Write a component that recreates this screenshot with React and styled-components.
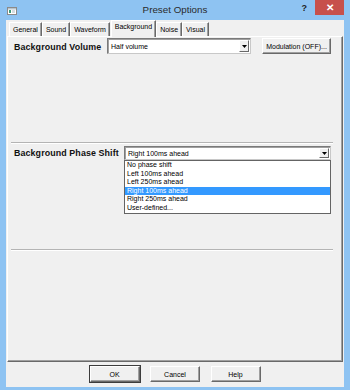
import React from "react";
import styled, { createGlobalStyle } from "styled-components";

const Global = createGlobalStyle`
  html, body { margin: 0; padding: 0; background: #8ec3f2; }
  body { font-family: "Liberation Sans", Arial, sans-serif; }
  * { box-sizing: border-box; }
`;

const Window = styled.div`
  width: 350px;
  height: 390px;
  background: #8ec3f2;
  display: flex;
  flex-direction: column;
`;

const TitleBar = styled.div`
  height: 20px;
  display: grid;
  grid-template-columns: 1fr auto 1fr;
  align-items: start;
`;

const IconCell = styled.div`
  padding: 7px 0 0 7px;
  display: flex;
`;

const Title = styled.div`
  font-size: 9.8px;
  color: #2b2b2b;
  line-height: 12px;
  padding-top: 4px;
`;

const Controls = styled.div`
  display: flex;
  justify-content: flex-end;
  align-items: flex-start;
  padding-right: 6px;
`;

const HelpGlyph = styled.div`
  font-weight: bold;
  font-size: 9px;
  color: #1e1e1e;
  padding-top: 3px;
  margin-right: 8px;
`;

const CloseButton = styled.div`
  width: 29px;
  height: 15px;
  background: #c7504b;
  color: #fff;
  font-size: 10px;
  font-weight: bold;
  display: flex;
  align-items: center;
  justify-content: center;
`;

const Client = styled.div`
  flex: 1;
  margin: 0 6px 3px 6px;
  background: #f0f0f0;
  display: flex;
  flex-direction: column;
`;

const TabStrip = styled.div`
  height: 16px;
  display: flex;
  align-items: flex-end;
  padding-left: 3px;
  position: relative;
  z-index: 1;
`;

const Tab = styled.div`
  height: ${(p) => (p.$active ? "17px" : "14px")};
  margin-bottom: ${(p) => (p.$active ? "-1px" : "0")};
  margin-left: ${(p) => (p.$active ? "1px" : "0")};
  padding: ${(p) => (p.$active ? "1px 3px 0" : "2px 3px 0")};
  background: #f0f0f0;
  border-top: 1px solid #fff;
  border-left: 1px solid #fff;
  border-right: 1px solid #696969;
  box-shadow: inset -1px 0 0 #a0a0a0;
  font-size: 7px;
  line-height: 9px;
  color: #000;
  white-space: nowrap;
`;

const TabPanel = styled.div`
  height: 326px;
  margin: 0 1px;
  border-top: 1px solid #fff;
  border-left: 1px solid #fff;
  border-right: 1px solid #696969;
  border-bottom: 1px solid #696969;
  box-shadow: inset -1px -1px 0 #a0a0a0;
  display: flex;
  flex-direction: column;
  position: relative;
`;

const FormRow = styled.div`
  display: flex;
  align-items: center;
  height: ${(p) => p.$h}px;
  margin-top: ${(p) => p.$top}px;
  padding-left: 6px;
`;

const Label = styled.div`
  width: ${(p) => p.$w}px;
  font-weight: bold;
  font-size: 8.9px;
  color: #111;
  white-space: nowrap;
  letter-spacing: 0.1px;
`;

const SelectWrap = styled.div`
  position: relative;
  width: ${(p) => p.$w}px;
  align-self: flex-start;
`;

const SelectBox = styled.div`
  height: ${(p) => p.$h}px;
  background: #fff;
  border: 1px solid #7a7a7a;
  border-right-color: #c8c8c8;
  border-bottom-color: #c8c8c8;
  box-shadow: inset 1px 1px 0 #a0a0a0;
  display: flex;
  align-items: center;
  padding: 0 1px 0 3px;
  font-size: 7px;
  color: #000;
`;

const SelectText = styled.span`
  flex: 1;
  white-space: nowrap;
`;

const ArrowButton = styled.div`
  width: 10px;
  height: calc(100% - 2px);
  background: #f0f0f0;
  border-top: 1px solid #fff;
  border-left: 1px solid #fff;
  border-right: 1px solid #696969;
  border-bottom: 1px solid #696969;
  display: flex;
  align-items: center;
  justify-content: center;
`;

const PushButton = styled.div`
  width: ${(p) => p.$w}px;
  height: ${(p) => p.$h}px;
  margin-left: ${(p) => p.$ml || 0}px;
  align-self: flex-start;
  background: #f0f0f0;
  border-top: 1px solid #fff;
  border-left: 1px solid #fff;
  border-right: 1px solid #696969;
  border-bottom: 1px solid #696969;
  box-shadow: ${(p) =>
    p.$default
      ? "0 0 0 1px #3c3c3c, inset -1px -1px 0 #a0a0a0"
      : "inset -1px -1px 0 #a0a0a0"};
  display: flex;
  align-items: center;
  justify-content: center;
  font-size: 7px;
  color: #000;
  white-space: nowrap;
`;

const Separator = styled.div`
  height: 2px;
  width: 322px;
  margin-left: 3px;
  margin-top: ${(p) => p.$top}px;
  border-top: 1px solid #b4b4b4;
  border-bottom: 1px solid #fff;
`;

const DropList = styled.div`
  position: absolute;
  top: 100%;
  left: 0;
  width: 100%;
  background: #fff;
  border: 1px solid #646464;
  padding: 0;
  z-index: 2;
`;

const DropItem = styled.div`
  height: 8.6px;
  line-height: 8.6px;
  padding-left: 2px;
  font-size: 7px;
  color: ${(p) => (p.$selected ? "#fff" : "#000")};
  background: ${(p) => (p.$selected ? "#3399ff" : "transparent")};
  white-space: nowrap;
`;

const ButtonRow = styled.div`
  flex: 1;
  display: flex;
  justify-content: center;
  align-items: flex-start;
  gap: 10.5px;
  padding-top: 4px;
`;

const Arrow = () => (
  <svg width="5" height="3" viewBox="0 0 5 3">
    <path d="M0 0H5L2.5 3Z" fill="#000" />
  </svg>
);

const WinIcon = () => (
  <svg width="10" height="8" viewBox="0 0 10 8">
    <rect x="0.5" y="0.5" width="9" height="7" fill="#fff" stroke="#8a8a8a" />
    <rect x="1" y="1" width="8" height="1.5" fill="#b8c4cc" />
    <rect x="2" y="3" width="2" height="3" fill="#3a9a7a" />
    <rect x="5" y="3" width="3" height="3" fill="#d6dde2" />
  </svg>
);

const tabs = ["General", "Sound", "Waveform", "Background", "Noise", "Visual"];
const phaseOptions = [
  "No phase shift",
  "Left 100ms ahead",
  "Left 250ms ahead",
  "Right 100ms ahead",
  "Right 250ms ahead",
  "User-defined...",
];

export default function App() {
  return (
    <>
      <Global />
      <Window>
        <TitleBar>
          <IconCell>
            <WinIcon />
          </IconCell>
          <Title>Preset Options</Title>
          <Controls>
            <HelpGlyph>?</HelpGlyph>
            <CloseButton>✕</CloseButton>
          </Controls>
        </TitleBar>
        <Client>
          <TabStrip>
            {tabs.map((t) => (
              <Tab key={t} $active={t === "Background"}>
                {t}
              </Tab>
            ))}
          </TabStrip>
          <TabPanel>
            <FormRow $h={17} $top={1}>
              <Label $w={93}>Background Volume</Label>
              <SelectWrap $w={144}>
                <SelectBox $h={16}>
                  <SelectText>Half volume</SelectText>
                  <ArrowButton>
                    <Arrow />
                  </ArrowButton>
                </SelectBox>
              </SelectWrap>
              <PushButton $w={69} $h={16} $ml={11}>
                Modulation (OFF)...
              </PushButton>
            </FormRow>
            <Separator $top={87} />
            <FormRow $h={14} $top={2}>
              <Label $w={110}>Background Phase Shift</Label>
              <SelectWrap $w={207}>
                <SelectBox $h={14}>
                  <SelectText>Right 100ms ahead</SelectText>
                  <ArrowButton>
                    <Arrow />
                  </ArrowButton>
                </SelectBox>
                <DropList>
                  {phaseOptions.map((o) => (
                    <DropItem key={o} $selected={o === "Right 100ms ahead"}>
                      {o}
                    </DropItem>
                  ))}
                </DropList>
              </SelectWrap>
            </FormRow>
            <Separator $top={89} />
          </TabPanel>
          <ButtonRow>
            <PushButton $w={50} $h={16} $default>
              OK
            </PushButton>
            <PushButton $w={50} $h={16}>
              Cancel
            </PushButton>
            <PushButton $w={50} $h={16}>
              Help
            </PushButton>
          </ButtonRow>
        </Client>
      </Window>
    </>
  );
}
